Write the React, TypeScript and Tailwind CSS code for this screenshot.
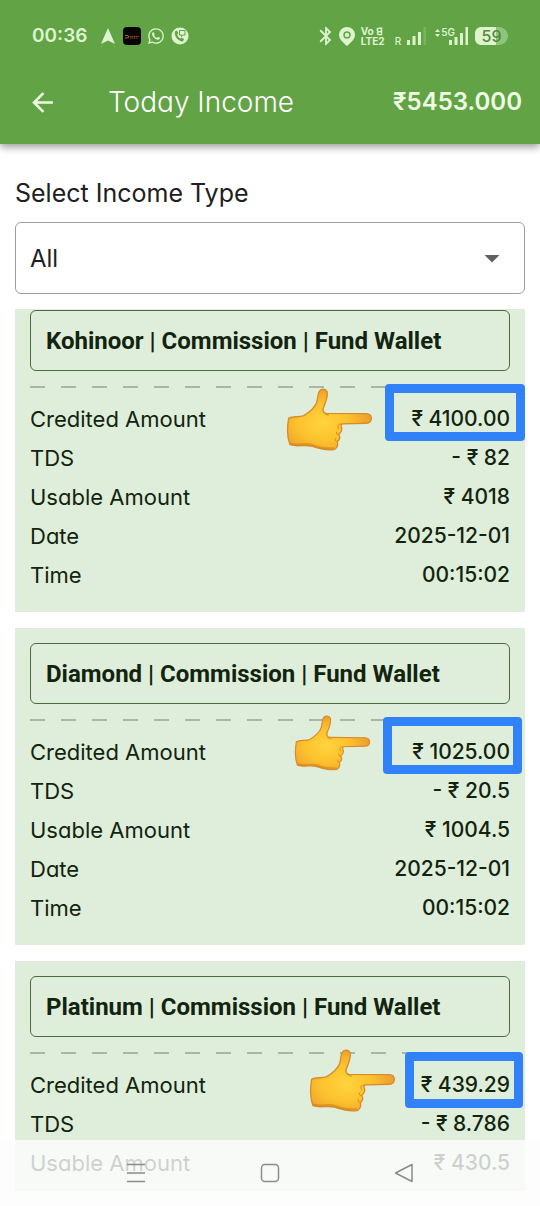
import { useState } from 'react';
import { MdBluetooth, MdArrowDropDown, MdArrowBack } from 'react-icons/md';
import { FaWhatsapp } from 'react-icons/fa';

type Income = {
  title: string;
  rows: [string, string][];
  box: string; // highlight around the credited amount
  hand: string; // pointer next to it
};

const incomes: Income[] = [
  {
    title: 'Kohinoor | Commission | Fund Wallet',
    rows: [
      ['Credited Amount', '₹ 4100.00'],
      ['TDS', '- ₹ 82'],
      ['Usable Amount', '₹ 4018'],
      ['Date', '2025-12-01'],
      ['Time', '00:15:02'],
    ],
    box: '-top-[15px] -right-[15px] h-[57px] w-[140px]',
    hand: '-top-[11px] right-[137px] w-[87px]',
  },
  {
    title: 'Diamond | Commission | Fund Wallet',
    rows: [
      ['Credited Amount', '₹ 1025.00'],
      ['TDS', '- ₹ 20.5'],
      ['Usable Amount', '₹ 1004.5'],
      ['Date', '2025-12-01'],
      ['Time', '00:15:02'],
    ],
    box: '-top-[15px] -right-3 h-[57px] w-[139px]',
    hand: '-top-[17px] right-[139px] w-[77px]',
  },
  {
    title: 'Platinum | Commission | Fund Wallet',
    rows: [
      ['Credited Amount', '₹ 439.29'],
      ['TDS', '- ₹ 8.786'],
      ['Usable Amount', '₹ 430.5'],
    ],
    box: '-top-[13px] -right-[13px] h-14 w-[118px]',
    hand: '-top-4 right-[114px] w-[87px]',
  },
];

function PointingHand({ className }: { className: string }) {
  return (
    <svg viewBox="0 0 264 194" className={`absolute ${className}`} aria-hidden="true">
      <defs>
        <radialGradient id="skin" cx="0.42" cy="0.55" r="0.6">
          <stop offset="0" stopColor="#ffd43c" />
          <stop offset="0.5" stopColor="#fcc22e" />
          <stop offset="1" stopColor="#eb9c2c" />
        </radialGradient>
      </defs>
      <path
        d="M8 92C20 84 38 90 54 84C70 74 88 58 93 44C96 34 96 22 100 12C104 2 118 1 124 10C130 22 120 44 113 62C111 70 115 76 122 77L244 78C264 79 264 107 244 107L172 109C164 111 167 116 169 122C171 132 165 137 160 141C165 150 163 158 156 162C158 172 156 182 146 187C120 190 96 183 76 176C56 171 32 180 12 172C3 150 4 116 8 92Z"
        fill="url(#skin)"
        stroke="#d98a2a"
        strokeWidth="4"
        strokeLinejoin="round"
      />
      <path d="M113 62C110 72 116 80 128 82" fill="none" stroke="#e09a2a" strokeWidth="4" strokeLinecap="round" />
      <path d="M168 109C158 109 154 116 160 124M160 141C154 142 152 138 153 134M156 162C150 163 148 158 150 154" fill="none" stroke="#d98a1f" strokeWidth="3" strokeLinecap="round" />
      <path d="M14 168C36 176 58 166 78 172C98 180 122 184 146 183" fill="none" stroke="#c97812" strokeWidth="6" opacity="0.5" />
    </svg>
  );
}

function StatusBar() {
  return (
    <div className="flex h-[72px] items-center justify-between px-8 text-[#ddf5cf]">
      <div className="flex items-center gap-1.5">
        <span className="mr-2 text-[19px] leading-6 font-semibold">00:36</span>
        <svg viewBox="0 0 14 16" className="h-4 w-3.5" fill="currentColor">
          <path d="M7 0L14 16L7 12.500L0 16Z" />
        </svg>
        <svg viewBox="0 0 18 18" className="ml-0.5 size-[18px]">
          <rect width="18" height="18" rx="4" fill="#080604" />
          <path d="M2 8.500H5L6 10L4 11H2" fill="none" stroke="#b8742e" strokeWidth="0.9" />
          <path d="M7 9.500H16M7 11H15" stroke="#a5482c" strokeWidth="0.9" strokeDasharray="1.500 0.500" />
        </svg>
        <FaWhatsapp className="size-[18px]" />
        <svg viewBox="0 0 18 18" className="size-[18px]">
          <circle cx="9" cy="9" r="8.500" fill="currentColor" />
          <path d="M4 4.500C3 9 7 14.500 12 14.500L13 12L10.500 10.500L9.500 11.500C7.500 10.500 6.500 9 6.200 7.500L7.300 6.500L6 3.500Z" fill="#62a345" />
          <path d="M8.500 3.500H14V8H12L10.500 9.500V8H8.500Z" fill="none" stroke="#62a345" />
        </svg>
      </div>

      <div className="flex items-center">
        <MdBluetooth className="size-[22px]" />
        <svg viewBox="0 0 16 19" className="ml-0.5 h-[19px] w-4" fill="currentColor">
          <path fillRule="evenodd" d="M8 0A8 8 0 0 0 0 8C0 12 4 15.500 8 19C12 15.500 16 12 16 8A8 8 0 0 0 8 0ZM8 4.200A3.700 3.700 0 1 1 8 11.600A3.700 3.700 0 1 1 8 4.200Z" />
          <circle cx="8" cy="7.900" r="2.200" />
        </svg>
        <span className="ml-1.5 w-6 text-[10px] leading-[10px] font-bold">
          Vo&nbsp;ꓭ
          <br />
          LTE2
        </span>
        <span className="mt-2.5 ml-2.5 text-[10px] leading-3 font-medium">R</span>
        <svg viewBox="0 0 20 18" className="ml-1.5 h-[18px] w-5" fill="currentColor">
          <path d="M0 13H3V18H0ZM5.500 9H8.500V18H5.500ZM11 5H14V18H11Z" />
          <path d="M16.500 0H19V18H16.500Z" opacity="0.2" />
        </svg>
        <span className="ml-2 flex">
          <svg viewBox="0 0 5 8" className="mt-0.5 h-2 w-[5px]" fill="currentColor">
            <path d="M0 3L2.500 0L5 3ZM0 5L2.500 8L5 5Z" />
          </svg>
          <span className="ml-px text-[10px] leading-[10px] font-semibold">5G</span>
          <svg viewBox="0 0 20 18" className="-ml-1.5 h-[18px] w-5" fill="currentColor">
            <path d="M0 13H3V18H0ZM5.500 10H8.500V18H5.500ZM11 6H14V18H11ZM16.500 0H19V18H16.500Z" />
          </svg>
        </span>
        <span className="ml-1.5 flex h-[18px] w-[33px] items-center justify-center rounded-l-md rounded-r-[9px] bg-[linear-gradient(90deg,#ddf5cf_0_21px,#8fc57b_21px)] text-base leading-4 font-medium text-[#56883f]">
          59
        </span>
      </div>
    </div>
  );
}

function IncomeCard({ income }: { income: Income }) {
  return (
    <section className="shrink-0 bg-[#dfeeda] px-[15px] pt-[15px] pb-[18px] text-[#12240f] first:pt-px">
      <h2 className="rounded-md border border-[#4c6a3f] px-[15px] pt-4 pb-3.5 font-['Roboto',sans-serif] text-2xl leading-[29px] font-bold">
        {income.title}
      </h2>
      <div className="mt-[15px] mb-[11px] h-0.5 bg-[repeating-linear-gradient(90deg,#aab5a6_0_15px,transparent_15px_31px)]" />
      <dl>
        {income.rows.map(([label, value], i) => (
          <div key={label} className="relative flex h-[39px] items-center justify-between leading-8">
            <dt className="text-[22px]">{label}</dt>
            <dd className="text-[21px] font-medium">{value}</dd>
            {i === 0 && (
              <>
                <PointingHand className={income.hand} />
                <span className={`absolute rounded-sm border-9 border-[#3182f8] ${income.box}`} />
              </>
            )}
          </div>
        ))}
      </dl>
    </section>
  );
}

export default function App() {
  const [type, setType] = useState('All');

  return (
    <div className="flex h-screen flex-col overflow-hidden bg-white pb-[15px] font-['Inter','Noto_Sans',sans-serif] [font-feature-settings:'cv11']">
      <header className="z-10 bg-[#62a345] text-white shadow-[0_3px_8px_rgba(0,0,0,0.4)]">
        <StatusBar />
        <div className="flex h-[72px] items-center pr-[18px] pb-3 pl-[27px]">
          <button type="button" aria-label="Back">
            <MdArrowBack className="size-[31px] text-[#efffe6]" />
          </button>
          <h1 className="ml-[50px] text-[28px] leading-8 font-light">Today Income</h1>
          <span className="ml-auto text-2xl leading-8 font-semibold text-[#efffe6]">₹5453.000</span>
        </div>
      </header>

      <main className="flex min-h-0 flex-1 flex-col px-[15px] pt-[33px]">
        <label htmlFor="income-type" className="text-[25px] leading-8 text-[#202020]">
          Select Income Type
        </label>
        <div className="relative mt-[13px]">
          <select
            id="income-type"
            value={type}
            onChange={(e) => setType(e.target.value)}
            className="h-[72px] w-full appearance-none rounded-md border border-[#9e9e9e] bg-white px-3.5 pt-0.5 text-2xl text-[#202020]"
          >
            <option>All</option>
            <option>Kohinoor</option>
            <option>Diamond</option>
            <option>Platinum</option>
          </select>
          <MdArrowDropDown className="pointer-events-none absolute top-[18px] right-[15px] size-9 text-[#616161]" />
        </div>

        <div className="mt-[15px] flex min-h-0 flex-1 flex-col gap-4 overflow-hidden">
          {incomes.map((income) => (
            <IncomeCard key={income.title} income={income} />
          ))}
        </div>
      </main>

      {/* Android navigation bar */}
      <nav className="fixed inset-x-0 bottom-0 z-20 flex h-[66px] items-center justify-center gap-[114px] bg-[#fdfdfe]/80 text-[#8b8b8b]">
        <button type="button" aria-label="Recent apps">
          <svg viewBox="0 0 20 20" className="size-5" fill="none" stroke="currentColor" strokeWidth="1.500">
            <path d="M1 1.500H19M1 10H19M1 18.500H19" />
          </svg>
        </button>
        <button type="button" aria-label="Home">
          <svg viewBox="0 0 20 20" className="size-5" fill="none" stroke="currentColor" strokeWidth="1.500">
            <rect x="1.500" y="1.500" width="17" height="17" rx="3.500" />
          </svg>
        </button>
        <button type="button" aria-label="Back to previous app">
          <svg viewBox="0 0 20 20" className="size-5" fill="none" stroke="currentColor" strokeWidth="1.500" strokeLinejoin="round">
            <path d="M18 1.500V18.500L1.500 10Z" />
          </svg>
        </button>
      </nav>
    </div>
  );
}
